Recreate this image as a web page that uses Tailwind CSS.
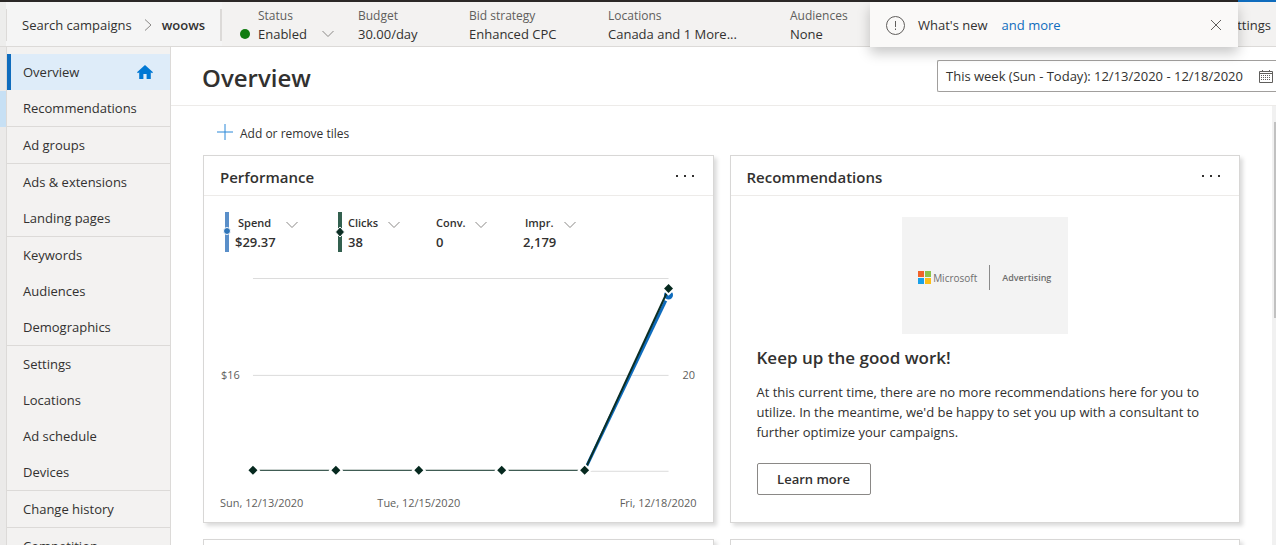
<!DOCTYPE html>
<html lang="en">
<head>
<meta charset="utf-8">
<meta name="viewport" content="width=device-width, initial-scale=1">
<title>Overview - woows</title>
<script src="https://cdn.jsdelivr.net/npm/@tailwindcss/browser@4"></script>
</head>
<body class="relative flex h-screen flex-col overflow-hidden bg-white font-['Open_Sans','Noto_Sans',sans-serif] text-[13px] leading-5 text-[#323130]">
  <svg class="hidden" aria-hidden="true">
    <symbol id="chev" viewBox="0 0 12 8"><path d="M0.5 1 L6 6.5 L11.5 1" fill="none" stroke="currentColor"/></symbol>
  </svg>

  <div class="flex h-[2px] shrink-0 bg-[#2b2827]"><div class="ml-auto w-[38px] bg-[#0f6cbd]"></div></div>

  <header class="flex h-[45px] shrink-0 items-center overflow-hidden whitespace-nowrap border-b border-[#dcdad8] bg-[#f3f2f1]">
    <div class="h-full w-[6px] shrink-0 bg-[#ededec]"></div>
    <nav aria-label="Breadcrumb" class="flex h-full w-[216px] shrink-0 items-center bg-[#f5f5f5] pt-px">
      <div class="h-8 w-px bg-[#dcdad8]"></div>
      <a href="#" class="ml-[15px]">Search campaigns</a>
      <svg class="ml-3 h-3 w-2" viewBox="0 0 8 12" fill="none" stroke="#8a8886" aria-hidden="true"><path d="M1 0.5 L7 6 L1 11.5"/></svg>
      <span class="ml-[10px] font-semibold">woows</span>
      <div class="ml-auto h-8 w-[2px] bg-[#dcdad8]"></div>
    </nav>
    <dl class="flex pt-px leading-[19px]">
      <div class="ml-[18px] w-[118px]">
        <dt class="pl-[18px] text-xs leading-[19px] text-[#605e5c]">Status</dt>
        <dd><button type="button" class="flex items-center"><span class="mr-2 size-[10px] rounded-full bg-[#107c10]"></span>Enabled<svg class="ml-[15px] h-2 w-3 text-[#8a8886]" aria-hidden="true"><use href="#chev"/></svg></button></dd>
      </div>
      <div class="w-[111px]"><dt class="text-xs leading-[19px] text-[#605e5c]">Budget</dt><dd>30.00/day</dd></div>
      <div class="w-[139px]"><dt class="text-xs leading-[19px] text-[#605e5c]">Bid strategy</dt><dd>Enhanced CPC</dd></div>
      <div class="w-[182px]"><dt class="text-xs leading-[19px] text-[#605e5c]">Locations</dt><dd>Canada and 1 More...</dd></div>
      <div><dt class="text-xs leading-[19px] text-[#605e5c]">Audiences</dt><dd>None</dd></div>
    </dl>
    <a href="#" class="ml-auto pr-[5px] pt-px">Settings</a>
  </header>

  <div class="flex min-h-0 flex-1">
    <div class="w-[6px] shrink-0 bg-[#ebeae9] pt-11"><div class="h-9 bg-[#c7e0f4]"></div></div>
    <nav aria-label="Campaign" class="w-[165px] shrink-0 overflow-hidden border-x border-[#dcdad8] bg-[#f3f2f1] pt-[7px]">
      <ul>
        <li><a href="#" aria-current="page" class="flex h-9 items-center justify-between border-l-4 border-[#0f6cbd] bg-[#deecf9] pl-3 pr-[17px] font-medium">Overview
          <svg class="h-[14px] w-4" viewBox="0 0 16 14" fill="#0078d4" aria-hidden="true"><path d="M8 0 L16 7.2 L15 8.2 L13.8 7.2 V14 H9.6 V9 H6.4 V14 H2.2 V7.2 L1 8.2 L0 7.2 Z"/></svg></a></li>
        <li><a href="#" class="flex h-9 items-center pl-4">Recommendations</a></li>
        <li class="border-t border-[#dcdad8]"><a href="#" class="flex h-9 items-center pl-4">Ad groups</a></li>
        <li class="border-t border-[#dcdad8]"><a href="#" class="flex h-9 items-center pl-4">Ads &amp; extensions</a></li>
        <li><a href="#" class="flex h-9 items-center pl-4">Landing pages</a></li>
        <li class="border-t border-[#dcdad8]"><a href="#" class="flex h-9 items-center pl-4">Keywords</a></li>
        <li><a href="#" class="flex h-9 items-center pl-4">Audiences</a></li>
        <li><a href="#" class="flex h-9 items-center pl-4">Demographics</a></li>
        <li class="border-t border-[#dcdad8]"><a href="#" class="flex h-9 items-center pl-4">Settings</a></li>
        <li><a href="#" class="flex h-9 items-center pl-4">Locations</a></li>
        <li><a href="#" class="flex h-9 items-center pl-4">Ad schedule</a></li>
        <li><a href="#" class="flex h-9 items-center pl-4">Devices</a></li>
        <li class="border-t border-[#dcdad8]"><a href="#" class="flex h-9 items-center pl-4">Change history</a></li>
        <li class="border-t border-[#dcdad8]"><a href="#" class="flex h-9 items-center pl-4">Competition</a></li>
      </ul>
    </nav>

    <main class="flex min-w-0 flex-1 flex-col">
      <div class="flex h-[59px] shrink-0 items-center justify-between border-b border-[#edebe9] pl-[31px]">
        <h1 class="pt-1 text-2xl font-semibold">Overview</h1>
        <button type="button" class="flex h-8 w-[339px] items-center justify-between whitespace-nowrap rounded-l-xs border border-r-0 border-[#a19f9d] bg-white pl-2 pr-[3px]">This week (Sun - Today): 12/13/2020 - 12/18/2020
          <svg class="h-[13px] w-[14px]" viewBox="0 0 14 13" fill="none" stroke="#605e5c" aria-hidden="true"><path d="M0.5 1.5 H13.5 V12.5 H0.5 Z M0.5 3.5 H13.5 M3.5 0 V2 M10.5 0 V2"/><path d="M2 5.5 H12 M2 7.5 H12 M2 9.5 H12" stroke-dasharray="1 1"/></svg></button>
      </div>

      <div class="flex min-h-0 flex-1">
        <div class="min-w-0 flex-1 overflow-hidden pl-8 pr-8">
          <button type="button" class="mb-[11px] ml-[14px] mt-[17px] flex h-[21px] items-center gap-[7px] text-xs leading-5">
            <svg class="mb-[3px] size-4" viewBox="0 0 16 16" fill="none" stroke="#2b88d8" aria-hidden="true"><path d="M8 0 V16 M0 8 H16"/></svg>Add or remove tiles</button>

          <div class="grid grid-cols-2 gap-4">
            <section class="h-[368px] border border-[#d8d7d6] shadow-[3px_3px_4px_rgba(0,0,0,0.14)]">
              <div class="flex h-10 items-center justify-between border-b border-[#edebe9] px-4">
                <h2 class="pt-[2px] text-[15px] font-semibold">Performance</h2>
                <button type="button" aria-label="More options for Performance" class="flex gap-[6px] pr-[3px]"><span class="size-[2px] bg-[#323130]"></span><span class="size-[2px] bg-[#323130]"></span><span class="size-[2px] bg-[#323130]"></span></button>
              </div>
              <div class="flex pl-[19px] pt-4 text-[11px] font-semibold leading-5">
                <button type="button" class="flex w-[113px] text-left">
                  <svg class="mr-1 h-10 w-2" viewBox="0 0 8 40" aria-hidden="true"><path d="M2 0 H6 V40 H2 Z" fill="#5a8fc9"/><circle cx="4" cy="19" r="3.5" fill="#2f75b9" stroke="#fff"/></svg>
                  <span><span class="flex items-center pt-px"><span class="w-[51px] pl-[3px]">Spend</span><svg class="mt-1 h-2 w-3 text-[#8a8886]" aria-hidden="true"><use href="#chev"/></svg></span><span class="block text-[13px] leading-[18px]">$29.37</span></span>
                </button>
                <button type="button" class="flex w-[96px] text-left">
                  <svg class="mr-1 h-10 w-2 overflow-visible" viewBox="0 0 8 40" aria-hidden="true"><path d="M2 0 H6 V40 H2 Z" fill="#33604f"/><path d="M4 15 L8.5 20 L4 25 L-.5 20 Z" fill="#0b2e24" stroke="#fff"/></svg>
                  <span><span class="flex items-center pt-px"><span class="w-[40px]">Clicks</span><svg class="mt-1 h-2 w-3 text-[#8a8886]" aria-hidden="true"><use href="#chev"/></svg></span><span class="block text-[13px] leading-[18px]">38</span></span>
                </button>
                <button type="button" class="flex w-[91px] flex-col pl-1 text-left"><span class="flex items-center pt-px"><span class="w-[39px]">Conv.</span><svg class="mt-1 h-2 w-3 text-[#8a8886]" aria-hidden="true"><use href="#chev"/></svg></span><span class="block text-[13px] leading-[18px]">0</span></button>
                <button type="button" class="flex flex-col text-left"><span class="flex items-center pt-px"><span class="w-[41px] pl-[2px]">Impr.</span><svg class="mt-1 h-2 w-3 text-[#8a8886]" aria-hidden="true"><use href="#chev"/></svg></span><span class="block text-[13px] leading-[18px]">2,179</span></button>
              </div>
              <svg class="mt-[18px] block w-full" viewBox="0 0 509 245" role="img" aria-label="Spend and clicks, 12/13/2020 to 12/18/2020">
                <path d="M49 8.5 H465 M49 105.5 H465 M49 201.5 H465" stroke="#dcdcdc"/>
                <path d="M49 200.5 H381" stroke="#fff" stroke-width="4"/>
                <path d="M381 200.5 L465 25" stroke="#0f6cbd" stroke-width="3"/>
                <circle cx="465" cy="25" r="5.5" fill="#0f6cbd" stroke="#fff" stroke-width="2"/>
                <path d="M49 200.5 H381" stroke="#0b2e24"/>
                <path d="M381 200.5 L465 19" stroke="#0b2e24" stroke-width="2" fill="none"/>
                <g fill="#06291f" stroke="#fff" stroke-width="2" paint-order="stroke">
                  <path id="pt" d="M49 196 L53.5 200.5 L49 205 L44.5 200.5 Z" stroke-width="4"/>
                  <use href="#pt" x="83"/><use href="#pt" x="166"/><use href="#pt" x="249"/><use href="#pt" x="332"/><use href="#pt" x="416" y="-182"/>
                </g>
                <g fill="#605e5c" font-size="11">
                  <text x="17" y="109">$16</text><text x="479" y="109">20</text>
                  <text x="16" y="237">Sun, 12/13/2020</text><text x="215" y="237" text-anchor="middle">Tue, 12/15/2020</text><text x="493" y="237" text-anchor="end">Fri, 12/18/2020</text>
                </g>
              </svg>
            </section>

            <section class="h-[368px] border border-[#d8d7d6] shadow-[3px_3px_4px_rgba(0,0,0,0.14)]">
              <div class="flex h-10 items-center justify-between border-b border-[#edebe9] px-4">
                <h2 class="pt-[2px] text-[15px] font-semibold">Recommendations</h2>
                <button type="button" aria-label="More options for Recommendations" class="flex gap-[6px] pr-[3px]"><span class="size-[2px] bg-[#323130]"></span><span class="size-[2px] bg-[#323130]"></span><span class="size-[2px] bg-[#323130]"></span></button>
              </div>
              <div class="px-[26px] pt-[21px]">
                <div class="mx-auto flex h-[117px] w-[166px] items-center justify-center bg-[#f3f3f3] pt-1 text-[#6e6e6e]">
                  <svg class="mr-[2px] size-[13px]" viewBox="0 0 13 13" aria-hidden="true"><path fill="#f1632a" d="M0 0h6v6H0z"/><path fill="#8bc34a" d="M7 0h6v6H7z"/><path fill="#18a0e8" d="M0 7h6v6H0z"/><path fill="#fcbd17" d="M7 7h6v6H7z"/></svg>
                  <span class="text-[10px] font-medium">Microsoft</span>
                  <span class="mx-3 h-[25px] w-px bg-[#8a8a8a]"></span>
                  <span class="text-[9px] font-semibold">Advertising</span>
                </div>
                <h3 class="mt-3 text-[17px] leading-6 font-semibold">Keep up the good work!</h3>
                <p class="mt-3">At this current time, there are no more recommendations here for you to utilize. In the meantime, we'd be happy to set you up with a consultant to further optimize your campaigns.</p>
                <button type="button" class="mt-[21px] h-8 w-[114px] rounded-xs border border-[#8a8886] font-semibold">Learn more</button>
              </div>
            </section>
            <section class="h-[368px] border border-[#d8d7d6] shadow-[3px_3px_4px_rgba(0,0,0,0.14)]"></section>
            <section class="h-[368px] border border-[#d8d7d6] shadow-[3px_3px_4px_rgba(0,0,0,0.14)]"></section>
          </div>
        </div>
        <div class="w-1 shrink-0 bg-[#f1f1f1] pl-[2px] pt-4"><div class="h-[196px] bg-[#c1c1c1]"></div></div>
      </div>
    </main>
  </div>

  <div role="status" class="absolute right-[38px] top-[2px] flex h-[45px] w-[368px] items-center bg-[#faf9f8] px-4 pt-px shadow-[0_6px_12px_rgba(0,0,0,0.22)]">
    <svg class="size-[19px]" viewBox="0 0 19 19" fill="none" stroke="#605e5c" aria-hidden="true"><circle cx="9.5" cy="9.5" r="9"/><path d="M9.5 5 V11 M9.5 12.5 V14"/></svg>
    <span class="ml-[13px]">What's new</span><a href="#" class="ml-[14px] text-[#0f6cbd]">and more</a>
    <button type="button" aria-label="Dismiss" class="ml-auto"><svg class="mr-px size-[10px]" viewBox="0 0 10 10" stroke="#605e5c" aria-hidden="true"><path d="M0 0 L10 10 M10 0 L0 10"/></svg></button>
  </div>
</body>
</html>
